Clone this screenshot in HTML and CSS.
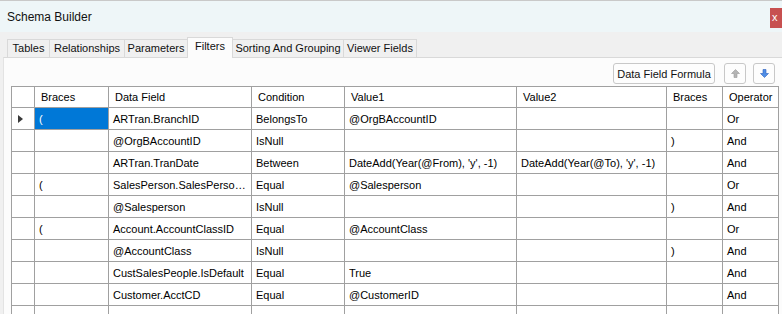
FILE: index.html
```html
<!DOCTYPE html>
<html>
<head>
<meta charset="utf-8">
<title>Schema Builder</title>
<link rel="stylesheet" href="styles.css">
</head>
<body>
<div class="window">
  <div class="titlebar">
    <span class="title">Schema Builder</span>
    <span class="close">x</span>
  </div>
  <div class="tabs">
    <div class="tab w-tables">Tables</div>
    <div class="tab w-rel">Relationships</div>
    <div class="tab w-par">Parameters</div>
    <div class="tab tab-active w-fil">Filters</div>
    <div class="tab w-sort">Sorting And Grouping</div>
    <div class="tab w-view">Viewer Fields</div>
  </div>
  <div class="panel">
    <div class="toolbar">
      <button class="btn formula">Data Field Formula</button>
      <button class="btn icon up" aria-label="Move up">
        <svg width="9" height="9" viewBox="0 0 9 9"><path d="M4.5 0.5 L8.5 4.5 H6 V8.5 H3 V4.5 H0.5 Z" fill="#b4b4b4" stroke="#9a9a9a" stroke-width="0.6"/></svg>
      </button>
      <button class="btn icon down" aria-label="Move down">
        <svg width="9" height="9" viewBox="0 0 9 9"><path d="M4.5 8.5 L8.5 4.5 H6 V0.5 H3 V4.5 H0.5 Z" fill="#4f8ee6" stroke="#2c5fbf" stroke-width="0.6"/></svg>
      </button>
    </div>
    <table class="grid">
      <colgroup>
        <col class="c-rh"><col class="c-br"><col class="c-df"><col class="c-co"><col class="c-v1"><col class="c-v2"><col class="c-br2"><col class="c-op">
      </colgroup>
      <thead>
        <tr><th></th><th>Braces</th><th>Data Field</th><th>Condition</th><th>Value1</th><th>Value2</th><th>Braces</th><th>Operator</th></tr>
      </thead>
      <tbody>
        <tr><td class="rh"><span class="caret"></span></td><td class="sel">(</td><td>ARTran.BranchID</td><td>BelongsTo</td><td>@OrgBAccountID</td><td></td><td></td><td>Or</td></tr>
        <tr><td class="rh"></td><td></td><td>@OrgBAccountID</td><td>IsNull</td><td></td><td></td><td>)</td><td>And</td></tr>
        <tr><td class="rh"></td><td></td><td>ARTran.TranDate</td><td>Between</td><td>DateAdd(Year(@From), 'y', -1)</td><td>DateAdd(Year(@To), 'y', -1)</td><td></td><td>And</td></tr>
        <tr><td class="rh"></td><td>(</td><td>SalesPerson.SalesPersonID</td><td>Equal</td><td>@Salesperson</td><td></td><td></td><td>Or</td></tr>
        <tr><td class="rh"></td><td></td><td>@Salesperson</td><td>IsNull</td><td></td><td></td><td>)</td><td>And</td></tr>
        <tr><td class="rh"></td><td>(</td><td>Account.AccountClassID</td><td>Equal</td><td>@AccountClass</td><td></td><td></td><td>Or</td></tr>
        <tr><td class="rh"></td><td></td><td>@AccountClass</td><td>IsNull</td><td></td><td></td><td>)</td><td>And</td></tr>
        <tr><td class="rh"></td><td></td><td>CustSalesPeople.IsDefault</td><td>Equal</td><td>True</td><td></td><td></td><td>And</td></tr>
        <tr><td class="rh"></td><td></td><td>Customer.AcctCD</td><td>Equal</td><td>@CustomerID</td><td></td><td></td><td>And</td></tr>
        <tr><td class="rh"></td><td></td><td></td><td></td><td></td><td></td><td></td><td></td></tr>
      </tbody>
    </table>
  </div>
</div>
</body>
</html>
```

FILE: styles.css
```css
html, body {
  margin: 0;
  padding: 0;
}

body {
  font-family: "Liberation Sans", Arial, sans-serif;
  background: #f0f0f0;
  color: #000;
}

.window {
  width: 782px;
  height: 314px;
  overflow: hidden;
  box-sizing: border-box;
  border-top: 1px solid #c9c9c9;
  display: flex;
  flex-direction: column;
  background: #f0f0f0;
}

.titlebar {
  height: 31px;
  flex: none;
  background: #eef6f8;
  display: flex;
  align-items: flex-start;
}

.title {
  font-size: 12px;
  line-height: 14px;
  padding: 9px 0 0 7px;
  color: #111;
}

.close {
  margin-left: auto;
  margin-top: 7px;
  width: 12px;
  height: 20px;
  background: #c75050;
  color: #fff;
  font-size: 11px;
  line-height: 19px;
  text-align: left;
  padding-left: 2px;
  box-sizing: border-box;
}

.tabs {
  height: 25px;
  flex: none;
  display: flex;
  align-items: flex-end;
  padding-left: 7px;
  background: #f0f0f0;
}

.tab {
  box-sizing: border-box;
  height: 18px;
  border: 1px solid #d9d9d9;
  border-bottom: none;
  margin-right: -1px;
  background: #f0f0f0;
  font-size: 11px;
  line-height: 17px;
  text-align: center;
  color: #111;
}

.tab-active {
  position: relative;
  z-index: 1;
  height: 21px;
  margin-bottom: -1px;
  background: #fcfcfc;
  line-height: 17px;
}

.w-tables { width: 43px; }
.w-rel { width: 76px; }
.w-par { width: 64px; }
.w-fil { width: 46px; }
.w-sort { width: 112px; }
.w-view { width: 74px; }

.panel {
  flex: 1;
  margin-left: 3px;
  border-top: 1px solid #d9d9d9;
  border-left: 1px solid #e3e3e3;
  background: #fcfcfc;
  padding: 5px 0 0 7px;
  overflow: hidden;
}

.toolbar {
  display: flex;
  justify-content: flex-end;
  align-items: center;
  height: 21px;
  padding-right: 7px;
}

.btn {
  box-sizing: border-box;
  height: 21px;
  border: 1px solid #c8c8c8;
  border-radius: 3px;
  background: #fdfdfd;
  font-family: "Liberation Sans", Arial, sans-serif;
  font-size: 11px;
  color: #111;
  padding: 0;
  margin: 0;
  display: flex;
  align-items: center;
  justify-content: center;
}

.formula {
  width: 102px;
  margin-right: 9px;
}

.icon {
  width: 22px;
}

.up {
  margin-right: 7px;
}

.grid {
  margin-top: 2px;
  border-collapse: collapse;
  table-layout: fixed;
  width: 767px;
  background: #fff;
  font-size: 11px;
}

.c-rh { width: 23px; }
.c-br { width: 74px; }
.c-df { width: 143px; }
.c-co { width: 93px; }
.c-v1 { width: 172px; }
.c-v2 { width: 150px; }
.c-br2 { width: 56px; }
.c-op { width: 56px; }

.grid th,
.grid td {
  border: 1px solid #a0a0a0;
  white-space: nowrap;
  overflow: hidden;
  text-overflow: ellipsis;
  text-align: left;
  font-weight: normal;
  color: #000;
}

.grid th {
  height: 20px;
  padding: 0 0 0 6px;
  font-size: 11px;
  text-overflow: clip;
}

.grid td {
  height: 21px;
  padding: 0 4px;
}

.grid td.sel {
  background: #0078d7;
  color: #fff;
}

.grid td.rh {
  padding: 0 0 0 6px;
}

.caret {
  display: block;
  width: 0;
  height: 0;
  border-left: 5px solid #3a3a3a;
  border-top: 4.5px solid transparent;
  border-bottom: 4.5px solid transparent;
}
```
